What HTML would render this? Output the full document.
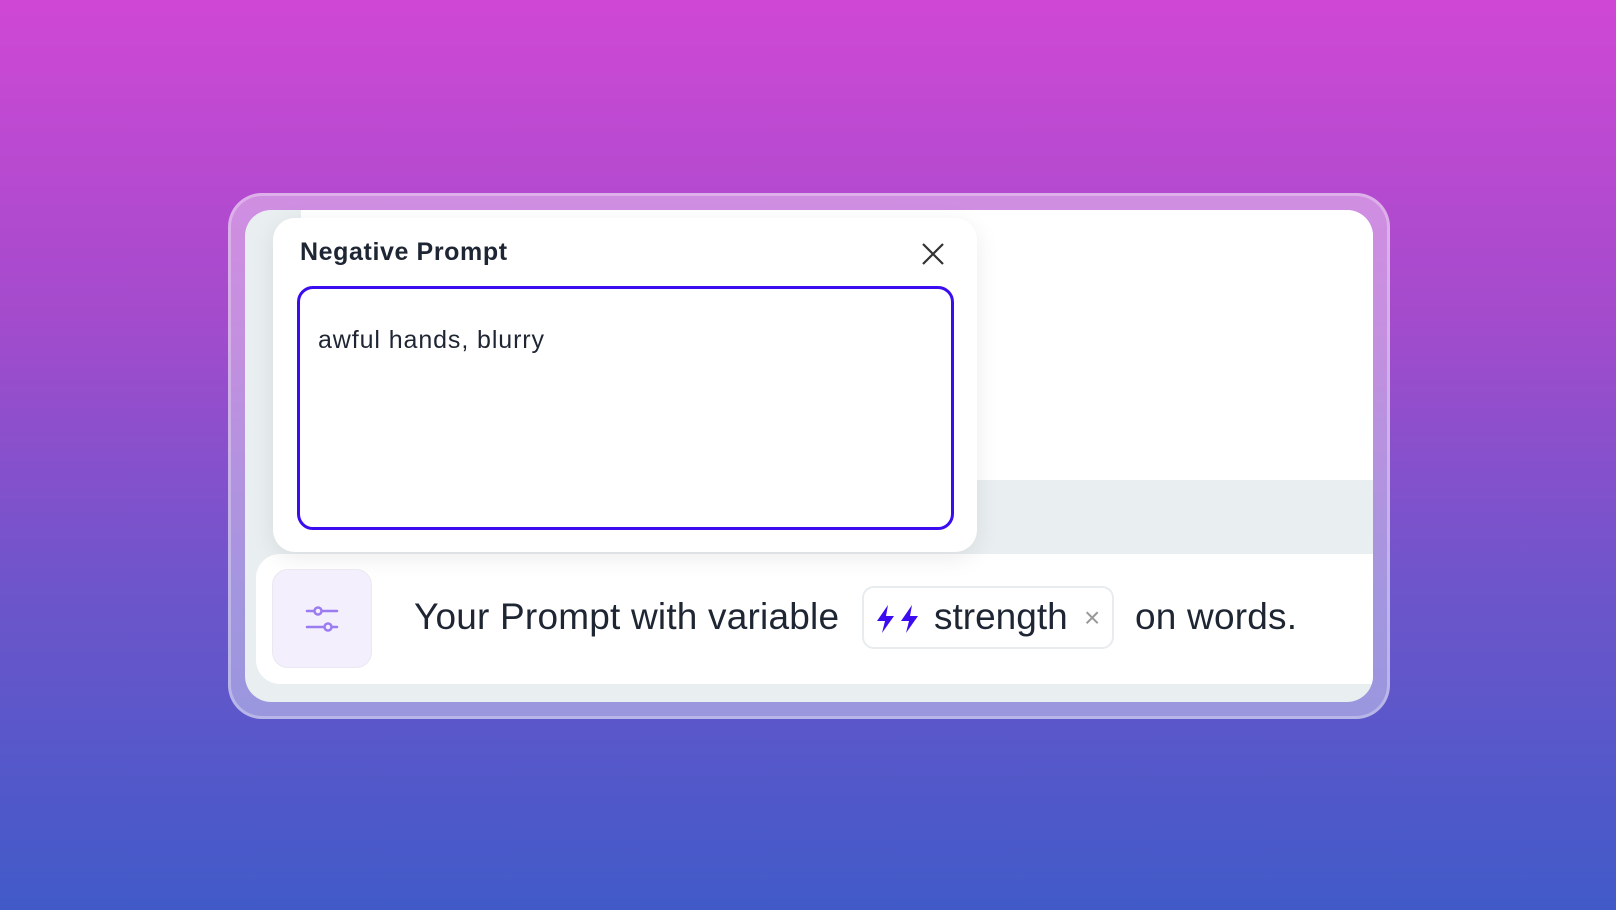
<!DOCTYPE html>
<html><head><style>
*{margin:0;padding:0;box-sizing:border-box}
body{width:1616px;height:910px;overflow:hidden;background:linear-gradient(180deg,#cf48d5 0%,#a34bcc 35%,#6d55cb 65%,#415ac8 100%);font-family:"Liberation Sans",sans-serif;position:relative}
.frame{position:absolute;left:228px;top:193px;width:1162px;height:526px;border-radius:34px;background:rgba(255,255,255,0.38);box-shadow:inset 0 0 0 3px rgba(255,255,255,0.3)}
.card{position:absolute;left:245px;top:210px;width:1128px;height:492px;border-radius:26px;background:#e9eef0;overflow:hidden}
.top{position:absolute;left:56px;top:0;right:0;height:270px;background:#fff}
.band{position:absolute;left:0;top:270px;right:0;height:72px;background:#e9eef0}
.bar{position:absolute;left:11px;top:344px;width:1117px;height:130px;background:#fff;border-radius:24px 0 0 24px}
.pop{position:absolute;left:273px;top:218px;width:704px;height:334px;background:#fff;border-radius:22px;box-shadow:0 6px 24px rgba(0,0,0,0.08)}
.title{position:absolute;left:27px;top:20px;font-size:25px;font-weight:bold;color:#1e2533;letter-spacing:0.6px}
.ta{position:absolute;left:24px;top:68px;width:657px;height:244px;border:3px solid #3b0cf0;border-radius:16px}
.ta span{position:absolute;left:18px;top:37px;font-size:25px;color:#1e2533;letter-spacing:0.9px}
.btn{position:absolute;left:272px;top:569px;width:100px;height:99px;border-radius:16px;background:#f3effd;border:1px solid #ebe8f2}
.t{position:absolute;top:596px;font-size:37px;color:#1e2533;white-space:nowrap;letter-spacing:0.2px}
.chip{position:absolute;left:862px;top:586px;width:252px;height:63px;border:2px solid #e8ecef;border-radius:12px;background:#fff}
</style></head><body>
<div class="frame"></div>
<div class="card"><div class="top"></div><div class="band"></div><div class="bar"></div></div>
<div class="pop">
<div class="title">Negative Prompt</div>
<svg style="position:absolute;left:648px;top:24px" width="24" height="24" viewBox="0 0 24 24"><path d="M2 2L22 22M22 2L2 22" stroke="#333" stroke-width="2.2" fill="none"/></svg>
<div class="ta"><span>awful hands, blurry</span></div>
</div>
<div class="btn"><svg style="position:absolute;left:31px;top:32px" width="38" height="34" viewBox="0 0 38 34"><g stroke="#9b7cf0" stroke-width="2.5" fill="none" stroke-linecap="round"><path d="M3 9H10M18 9H33"/><circle cx="14" cy="9" r="3.5"/><path d="M3 25H20M28 25H33"/><circle cx="24" cy="25" r="3.5"/></g></svg></div>
<div class="t" style="left:414px">Your Prompt with variable</div>
<div class="chip">
<svg style="position:absolute;left:10px;top:16px" width="50" height="30" viewBox="0 0 50 30"><path d="M14 1L3 17H11L8 29L20 12H12Z M38 1L27 17H35L32 29L44 12H36Z" fill="#3b0cf0"/></svg>
<span style="position:absolute;left:70px;top:8px;font-size:37px;color:#1e2533">strength</span>
<span style="position:absolute;left:220px;top:14px;font-size:28px;color:#999">×</span>
</div>
<div class="t" style="left:1135px">on words.</div>
</body></html>
